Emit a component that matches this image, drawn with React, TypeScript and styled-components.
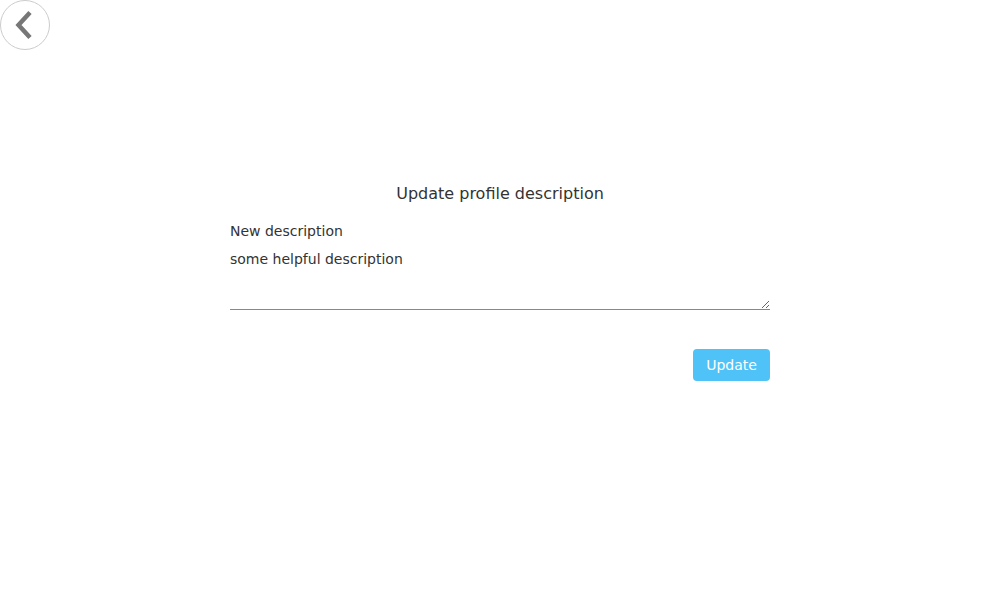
import React from "react";
import styled, { createGlobalStyle } from "styled-components";

const Global = createGlobalStyle`
  html, body { margin: 0; padding: 0; background: #fff; }
  body { font-family: "DejaVu Sans", sans-serif; color: #333; }
`;

const Page = styled.div`
  width: 1000px;
  height: 600px;
  display: flex;
  flex-direction: column;
`;

const TopBar = styled.div`
  display: flex;
  height: 50px;
`;

const BackButton = styled.button`
  width: 50px;
  height: 50px;
  border-radius: 50%;
  border: 1px solid #ccc;
  background: #fff;
  padding: 0;
  display: flex;
  align-items: center;
  justify-content: center;
  cursor: pointer;
  svg { display: block; }
`;

const Form = styled.form`
  width: 540px;
  margin: 134px auto 0;
  display: flex;
  flex-direction: column;
`;

const Title = styled.h2`
  margin: 0 0 20px;
  font-size: 16px;
  font-weight: normal;
  text-align: center;
  color: #333;
`;

const Label = styled.label`
  font-size: 14px;
  color: #333;
  margin-bottom: 12px;
`;

const TextArea = styled.textarea`
  font-family: "DejaVu Sans", sans-serif;
  font-size: 14px;
  color: #333;
  border: none;
  border-bottom: 1px solid #888;
  padding: 0;
  height: 58px;
  outline: none;
  resize: vertical;
  background: transparent;
`;

const Actions = styled.div`
  display: flex;
  justify-content: flex-end;
  margin-top: 39px;
`;

const Button = styled.button`
  height: 32px;
  width: 77px;
  border: none;
  border-radius: 4px;
  background: #4fc3f7;
  color: #fff;
  font-family: "DejaVu Sans", sans-serif;
  font-size: 14px;
  cursor: pointer;
`;

export default function App() {
  return (
    <Page>
      <Global />
      <TopBar>
        <BackButton type="button" aria-label="Back">
          <svg width="48" height="48" viewBox="1 1 48 48">
            <path d="M30 12.5 L18.5 25 L30 37.5" fill="none" stroke="#777" strokeWidth="4.5" />
          </svg>
        </BackButton>
      </TopBar>
      <Form onSubmit={(e) => e.preventDefault()}>
        <Title>Update profile description</Title>
        <Label htmlFor="desc">New description</Label>
        <TextArea id="desc" defaultValue="some helpful description" />
        <Actions>
          <Button type="submit">Update</Button>
        </Actions>
      </Form>
    </Page>
  );
}
